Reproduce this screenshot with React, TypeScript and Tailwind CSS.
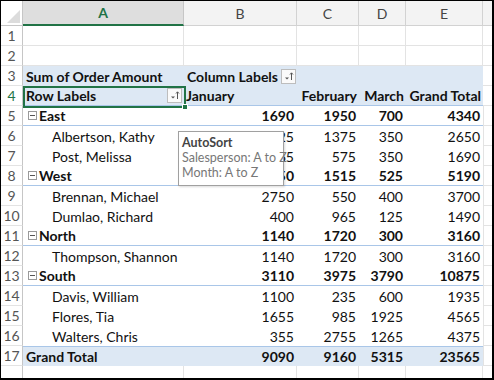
import React from 'react';

type Kind = 'region' | 'person' | 'total';
type Row = { n: number; kind: Kind; label: string; vals: number[] };

const rows: Row[] = [
  { n: 5, kind: 'region', label: 'East', vals: [1690, 1950, 700, 4340] },
  { n: 6, kind: 'person', label: 'Albertson, Kathy', vals: [925, 1375, 350, 2650] },
  { n: 7, kind: 'person', label: 'Post, Melissa', vals: [765, 575, 350, 1690] },
  { n: 8, kind: 'region', label: 'West', vals: [3150, 1515, 525, 5190] },
  { n: 9, kind: 'person', label: 'Brennan, Michael', vals: [2750, 550, 400, 3700] },
  { n: 10, kind: 'person', label: 'Dumlao, Richard', vals: [400, 965, 125, 1490] },
  { n: 11, kind: 'region', label: 'North', vals: [1140, 1720, 300, 3160] },
  { n: 12, kind: 'person', label: 'Thompson, Shannon', vals: [1140, 1720, 300, 3160] },
  { n: 13, kind: 'region', label: 'South', vals: [3110, 3975, 3790, 10875] },
  { n: 14, kind: 'person', label: 'Davis, William', vals: [1100, 235, 600, 1935] },
  { n: 15, kind: 'person', label: 'Flores, Tia', vals: [1655, 985, 1925, 4565] },
  { n: 16, kind: 'person', label: 'Walters, Chris', vals: [355, 2755, 1265, 4375] },
  { n: 17, kind: 'total', label: 'Grand Total', vals: [9090, 9160, 5315, 23565] },
];

const valWidths = ['w-[113px]', 'w-[62px]', 'w-[47px]', 'w-[77px]'];

function RowNum({ n, green }: { n: number | string; green?: boolean }) {
  return (
    <div
      className={`w-[22px] shrink-0 flex items-center justify-center border-r border-r-[#c6c6c6] border-b border-b-[#e3e3e3] ${
        green ? 'text-[#217346]' : 'text-[#555]'
      }`}
    >
      {n}
    </div>
  );
}

function SortButton() {
  return (
    <div className="w-[15px] h-[15px] border border-[#bdbdbd] bg-[#fafafa] flex items-center justify-center">
      <svg width="11" height="11" viewBox="0 0 11 11">
        <path d="M2 6.5 L6 6.5 L4 8.5 Z" fill="#555" />
        <path d="M8.5 2 L8.5 9" stroke="#555" strokeWidth="1" />
        <path d="M7 3.5 L8.5 1.8 L10 3.5" stroke="#555" strokeWidth="1" fill="none" />
      </svg>
    </div>
  );
}

function Collapse() {
  return (
    <div className="w-[9px] h-[9px] border border-[#9a9a9a] bg-white flex items-center justify-center mr-[2px]">
      <div className="w-[5px] h-px bg-[#555]" />
    </div>
  );
}

function EmptyRow({ n }: { n: number }) {
  return (
    <div className="flex h-[20px]">
      <RowNum n={n} />
      {['w-[161px]', 'w-[113px]', 'w-[62px]', 'w-[47px]', 'w-[77px]'].map((w) => (
        <div key={w} className={`${w} shrink-0 border-r border-b border-[#e3e3e3]`} />
      ))}
      <div className="flex-1 border-b border-[#e3e3e3]" />
    </div>
  );
}

export default function App() {
  return (
    <div
      className="w-[494px] h-[380px] bg-white border-l border-t border-r-2 border-b-2 border-black flex flex-col overflow-hidden relative text-[14px] text-[#111]"
      style={{ fontFamily: 'Lato, "Liberation Sans", sans-serif' }}
    >
      {/* column headers */}
      <div className="flex h-[25px] shrink-0 text-[#444]">
        <div className="w-[22px] shrink-0 bg-white border-r border-b border-[#c6c6c6] relative">
          <div className="absolute right-[2px] bottom-[2px] w-0 h-0 border-l-[13px] border-l-transparent border-b-[13px] border-b-[#dcdcdc]" />
        </div>
        <div className="w-[161px] shrink-0 bg-[#dedede] border-r border-r-[#c6c6c6] border-b-2 border-b-[#217346] flex items-center justify-center text-[#217346] font-bold">
          A
        </div>
        {['B', 'C', 'D', 'E'].map((c, i) => (
          <div
            key={c}
            className={`${valWidths[i]} shrink-0 bg-[#f3f3f3] border-r border-b border-[#d2d2d2] flex items-center justify-center`}
          >
            {c}
          </div>
        ))}
        <div className="flex-1 bg-[#f3f3f3] border-b border-[#d2d2d2]" />
      </div>

      <EmptyRow n={1} />
      <EmptyRow n={2} />

      {/* row 3 */}
      <div className="flex h-[20px] shrink-0">
        <RowNum n={3} />
        <div className="w-[460px] shrink-0 flex bg-[#dde8f4] font-bold">
          <div className="w-[161px] shrink-0 pl-[3px] flex items-center">Sum of Order Amount</div>
          <div className="w-[113px] shrink-0 pl-[3px] flex items-center justify-between pr-[1px]">
            <span>Column Labels</span>
            <SortButton />
          </div>
        </div>
        <div className="flex-1 border-b border-[#e3e3e3]" />
      </div>

      {/* row 4 */}
      <div className="flex h-[20px] shrink-0">
        <RowNum n={4} green />
        <div className="w-[460px] shrink-0 flex bg-[#dde8f4] font-bold border-b border-[#a9c6e8]">
          <div className="w-[161px] shrink-0 pl-[3px] pr-[2px] flex items-center justify-between">
            <span>Row Labels</span>
            <SortButton />
          </div>
          <div className="w-[113px] shrink-0 pl-[2px] flex items-center">January</div>
          <div className="w-[62px] shrink-0 pr-[2px] flex items-center justify-end">February</div>
          <div className="w-[47px] shrink-0 pr-[2px] flex items-center justify-end">March</div>
          <div className="w-[77px] shrink-0 pr-[2px] flex items-center justify-end">Grand Total</div>
        </div>
        <div className="flex-1 border-b border-[#e3e3e3]" />
      </div>

      {rows.map((r) => {
        const bold = r.kind !== 'person';
        const pivotCls =
          r.kind === 'region'
            ? 'border-b border-[#a9c6e8]'
            : r.kind === 'total'
            ? 'bg-[#dde8f4] border-t border-[#a9c6e8]'
            : '';
        return (
          <div key={r.n} className="flex h-[20px] shrink-0">
            <RowNum n={r.n} />
            <div className={`w-[460px] shrink-0 flex ${pivotCls}`}>
              <div className={`w-[161px] shrink-0 flex items-center ${bold ? 'font-bold' : ''} ${
                r.kind === 'person' ? 'pl-[29px]' : r.kind === 'region' ? 'pl-[5px]' : 'pl-[3px]'
              }`}>
                {r.kind === 'region' && <Collapse />}
                <span>{r.label}</span>
              </div>
              {r.vals.map((v, i) => (
                <div
                  key={i}
                  className={`${valWidths[i]} shrink-0 flex items-center justify-end pr-[3px] ${
                    bold ? 'font-bold' : ''
                  }`}
                >
                  {v}
                </div>
              ))}
            </div>
            <div className="flex-1 border-l border-b border-[#e3e3e3]" />
          </div>
        );
      })}

      {/* row 18 partial */}
      <div className="flex flex-1">
        <div className="w-[22px] shrink-0 border-r border-[#c6c6c6]" />
        {['w-[161px]', 'w-[113px]', 'w-[62px]', 'w-[47px]', 'w-[77px]'].map((w) => (
          <div key={w} className={`${w} shrink-0 border-r border-[#e3e3e3]`} />
        ))}
        <div className="flex-1" />
      </div>

      {/* active cell A4 */}
      <div className="absolute left-[22px] top-[85px] w-[163px] h-[22px] border-2 border-[#217346] pointer-events-none" />
      <div className="absolute left-[181px] top-[103px] w-[6px] h-[6px] bg-[#217346] border border-white" />

      {/* AutoSort tooltip */}
      <div
        className="absolute left-[177px] top-[130px] w-[106px] h-[55px] bg-white border border-[#a0a0a0] shadow-[1px_1px_2px_rgba(0,0,0,0.15)] pl-[3px] pt-[3px] text-[12.5px] leading-[15px]"
        style={{ fontFamily: 'Lato, "Liberation Sans", sans-serif' }}
      >
        <div className="font-bold text-[#444]">AutoSort</div>
        <div className="text-[#777] whitespace-nowrap">Salesperson: A to Z</div>
        <div className="text-[#777]">Month: A to Z</div>
      </div>
    </div>
  );
}
